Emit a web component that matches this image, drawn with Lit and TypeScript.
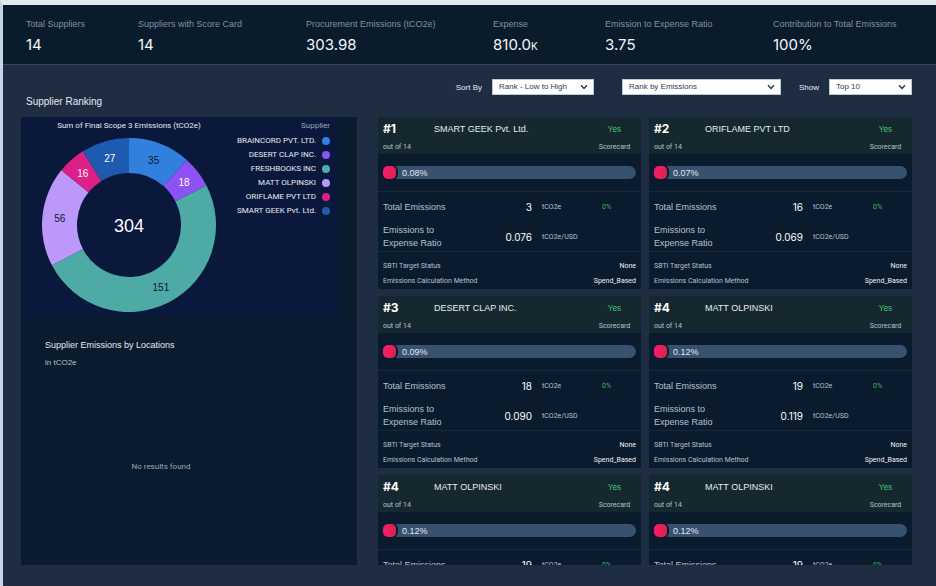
import { LitElement, html, svg, css } from "lit";
import { customElement, property } from "lit/decorators.js";

interface Kpi {
  label: string;
  value: string;
  suffix?: string;
}

interface Slice {
  name: string;
  value: number;
  color: string;
  ink: string;
}

interface Supplier {
  rank: number;
  name: string;
  share: string;
  total: string;
  ratio: string;
}

const KPIS: Kpi[] = [
  { label: "Total Suppliers", value: "14" },
  { label: "Suppliers with Score Card", value: "14" },
  { label: "Procurement Emissions (tCO2e)", value: "303.98" },
  { label: "Expense", value: "810.0", suffix: "K" },
  { label: "Emission to Expense Ratio", value: "3.75" },
  { label: "Contribution to Total Emissions", value: "100%" },
];

const SLICES: Slice[] = [
  { name: "BRAINCORD PVT. LTD.", value: 35, color: "#3180dd", ink: "#0b1730" },
  { name: "DESERT CLAP INC.", value: 18, color: "#8c52f5", ink: "#ffffff" },
  { name: "FRESHBOOKS INC", value: 151, color: "#4daaa5", ink: "#0b1730" },
  { name: "MATT OLPINSKI", value: 56, color: "#bb98fa", ink: "#0b1730" },
  { name: "ORIFLAME PVT LTD", value: 16, color: "#dc2088", ink: "#ffffff" },
  { name: "SMART GEEK Pvt. Ltd.", value: 27, color: "#1e5bb0", ink: "#ffffff" },
];

const SUPPLIERS: Supplier[] = [
  { rank: 1, name: "SMART GEEK Pvt. Ltd.", share: "0.08%", total: "3", ratio: "0.076" },
  { rank: 2, name: "ORIFLAME PVT LTD", share: "0.07%", total: "16", ratio: "0.069" },
  { rank: 3, name: "DESERT CLAP INC.", share: "0.09%", total: "18", ratio: "0.090" },
  { rank: 4, name: "MATT OLPINSKI", share: "0.12%", total: "19", ratio: "0.119" },
  { rank: 4, name: "MATT OLPINSKI", share: "0.12%", total: "19", ratio: "0.119" },
  { rank: 4, name: "MATT OLPINSKI", share: "0.12%", total: "19", ratio: "0.119" },
];

@customElement("donut-chart")
class DonutChart extends LitElement {
  static styles = css`
    :host {
      display: block;
      font-family: "Liberation Sans", Arial, sans-serif;
    }
    svg {
      display: block;
      width: 100%;
    }
    .label {
      font-size: 10px;
      text-anchor: middle;
    }
    .total {
      font-size: 18px;
      text-anchor: middle;
      fill: #ffffff;
    }
  `;

  render() {
    const center = 88;
    const outer = 87;
    const inner = 52;
    const sum = SLICES.reduce((acc, s) => acc + s.value, 0);
    const at = (radius: number, turn: number) => {
      const a = turn * 2 * Math.PI;
      return [center + radius * Math.sin(a), center - radius * Math.cos(a)];
    };
    let start = 0;
    const parts = SLICES.map((s) => {
      const end = start + s.value / sum;
      const large = end - start > 0.5 ? 1 : 0;
      const [ax, ay] = at(outer, start);
      const [bx, by] = at(outer, end);
      const [cx, cy] = at(inner, end);
      const [dx, dy] = at(inner, start);
      const [tx, ty] = at((outer + inner) / 2, (start + end) / 2);
      start = end;
      return svg`
        <path fill=${s.color} d="M${ax} ${ay}A${outer} ${outer} 0 ${large} 1 ${bx} ${by}L${cx} ${cy}A${inner} ${inner} 0 ${large} 0 ${dx} ${dy}Z"></path>
        <text class="label" fill=${s.ink} x=${tx} y=${ty + 4}>${s.value}</text>`;
    });
    return html`
      <svg viewBox="0 0 176 176" role="img" aria-label="Emissions by supplier">
        ${parts}
        <text class="total" x="88" y="95">304</text>
      </svg>
    `;
  }
}

@customElement("supplier-card")
class SupplierCard extends LitElement {
  @property({ attribute: false }) supplier!: Supplier;

  static styles = css`
    :host {
      display: block;
      background: #0a1b2d;
      color: #b6c1cf;
    }
    .head {
      display: grid;
      grid-template-columns: 51px 1fr 33px;
      align-items: center;
      row-gap: 3px;
      padding: 4px 10px 0 5px;
      background: #15282f;
    }
    .rank {
      font: 700 12px/16px Inter, "Liberation Sans", sans-serif;
      color: #ffffff;
    }
    .name {
      margin: 0;
      font-size: 9px;
      line-height: 16px;
      font-weight: 400;
      color: #e6ebf1;
    }
    .yes {
      font: 8px/14px Inter, "Liberation Sans", sans-serif;
      text-align: center;
      color: #3fc466;
    }
    .small {
      font: 7px/14px Roboto, "Liberation Sans", sans-serif;
      white-space: nowrap;
    }
    .score {
      grid-column: 3;
      text-align: center;
    }
    .share {
      padding: 12px 5px;
      border-bottom: 1px solid #16293b;
    }
    .track {
      display: flex;
      align-items: center;
      gap: 6px;
      height: 13px;
      border-radius: 7px;
      background: #37516e;
      font-size: 9px;
      color: #e3e9f0;
    }
    .knob {
      width: 13px;
      height: 13px;
      border-radius: 5px;
      background: linear-gradient(90deg, #fb1a6e, #d92448);
      box-shadow: 1px 0 0 1px #0a1b2d;
      clip-path: inset(0 -2px 0 0);
    }
    .metrics {
      display: grid;
      grid-template-columns: 90fr 59fr 70fr 34fr;
      align-items: center;
      row-gap: 7px;
      margin: 0;
      padding: 5px 5px 1px;
      border-bottom: 1px solid #16293b;
    }
    .metrics dt,
    .metrics dd {
      margin: 0;
    }
    .metrics dt {
      grid-column: 1;
      font-size: 9px;
      line-height: 13px;
    }
    .metrics .value {
      font: 10px/20px Inter, "Liberation Sans", sans-serif;
      text-align: right;
      color: #ffffff;
    }
    .metrics .unit {
      padding-left: 10px;
      font: 7px/14px Roboto, "Liberation Sans", sans-serif;
    }
    .metrics .delta {
      font: 7px/14px Roboto, "Liberation Sans", sans-serif;
      color: #3fb45f;
    }
    .facts {
      margin: 0;
      padding: 7px 5px 0;
      font: 7px/15px Roboto, "Liberation Sans", sans-serif;
    }
    .fact {
      display: flex;
      justify-content: space-between;
    }
    .fact dd {
      margin: 0;
      color: #eef2f6;
    }
  `;

  render() {
    const s = this.supplier;
    return html`
      <article>
        <header class="head">
          <span class="rank">#${s.rank}</span>
          <h3 class="name">${s.name}</h3>
          <span class="yes">Yes</span>
          <span class="small">out of 14</span>
          <span class="small score">Scorecard</span>
        </header>
        <div class="share">
          <div class="track"><span class="knob"></span><span>${s.share}</span></div>
        </div>
        <dl class="metrics">
          <dt>Total Emissions</dt>
          <dd class="value">${s.total}</dd>
          <dd class="unit">tCO2e</dd>
          <dd class="delta">0%</dd>
          <dt>Emissions to<br />Expense Ratio</dt>
          <dd class="value">${s.ratio}</dd>
          <dd class="unit">tCO2e/USD</dd>
        </dl>
        <dl class="facts">
          <div class="fact"><dt>SBTI Target Status</dt><dd>None</dd></div>
          <div class="fact"><dt>Emissions Calculation Method</dt><dd>Spend_Based</dd></div>
        </dl>
      </article>
    `;
  }
}

@customElement("app-root")
class AppRoot extends LitElement {
  static styles = css`
    :host {
      display: flex;
      flex-direction: column;
      box-sizing: border-box;
      height: 100vh;
      border-top: 5px solid #e3e8ec;
      border-left: 3px solid #c3d5e5;
      background: #1f2d43;
      color: #e6ebf1;
      font-family: "Liberation Sans", Arial, sans-serif;
    }
    .kpis {
      display: grid;
      grid-template-columns: 112fr 168fr 187fr 112fr 168fr 163fr;
      margin: 0;
      padding: 12px 0 8px 23px;
      background: #0a1b2c;
      border-bottom: 1px solid #324965;
    }
    .kpis dt {
      font-size: 9px;
      line-height: 14px;
      color: #8290a1;
    }
    .kpis dd {
      margin: 4px 0 0;
      font: 15px/20px Inter, "Liberation Sans", sans-serif;
      color: #f4f7fa;
    }
    .suffix {
      font-size: 10px;
    }
    .toolbar {
      display: flex;
      justify-content: space-between;
      align-items: flex-start;
      box-sizing: border-box;
      min-height: 52px;
      padding: 14px 24px 8px 23px;
    }
    h1 {
      align-self: flex-end;
      margin: 0;
      font-size: 10px;
      line-height: 14px;
      font-weight: 400;
    }
    .controls {
      display: flex;
      align-items: center;
      font-size: 8px;
    }
    .controls label {
      margin-right: 10px;
    }
    .picker {
      position: relative;
      display: flex;
    }
    .sort {
      width: 102px;
      margin-right: 28px;
    }
    .metric {
      width: 159px;
      margin-right: 18px;
    }
    .count {
      width: 83px;
    }
    select {
      appearance: none;
      width: 100%;
      height: 16px;
      margin: 0;
      padding: 0 18px 0 6px;
      border: 1px solid #b9c8da;
      border-radius: 0;
      background: #ffffff;
      color: #2b3d58;
      font: 8px/14px "Liberation Sans", Arial, sans-serif;
    }
    .chevron {
      position: absolute;
      top: 5px;
      right: 6px;
      width: 8px;
      height: 6px;
      fill: none;
      stroke: #26364e;
      stroke-width: 1.4;
      pointer-events: none;
    }
    main {
      display: grid;
      grid-template-columns: 336fr 534fr;
      grid-template-rows: minmax(0, 1fr);
      gap: 21px;
      flex: 1;
      min-height: 0;
      padding: 0 24px 21px 18px;
    }
    .side {
      background: #0a1b2d;
    }
    .chart {
      display: grid;
      grid-template-columns: 176px 1fr;
      column-gap: 12px;
      margin-right: 19px;
      padding: 3px 8px 5px 20px;
      background: #0a183c;
      font-family: Roboto, "Liberation Sans", sans-serif;
      font-size: 8px;
    }
    .chart-title {
      margin: 0;
      font-size: 8px;
      line-height: 12px;
      font-weight: 400;
      text-align: center;
    }
    .chart donut-chart {
      margin-top: 5px;
    }
    .legend {
      grid-column: 2;
      grid-row: 1 / 3;
      text-align: right;
    }
    .legend-title {
      line-height: 12px;
      color: #9aa6bb;
    }
    .legend ul {
      display: grid;
      gap: 2px;
      margin: 3px 0 0;
      padding: 0;
      list-style: none;
    }
    .legend li {
      display: flex;
      justify-content: flex-end;
      align-items: center;
      gap: 6px;
      line-height: 12px;
      white-space: nowrap;
    }
    .dot {
      width: 8px;
      height: 8px;
      border-radius: 50%;
    }
    .locations {
      padding: 20px 24px;
    }
    h2 {
      margin: 0;
      font-size: 9px;
      line-height: 14px;
      font-weight: 400;
    }
    .locations-unit {
      margin: 4px 0 0;
      font-size: 8px;
      line-height: 14px;
      color: #b6c1cf;
    }
    .empty {
      margin: 90px 56px 0 0;
      font: 8px/14px Roboto, "Liberation Sans", sans-serif;
      text-align: center;
      color: #98a8bd;
    }
    .cards {
      display: grid;
      grid-template-columns: 1fr 1fr;
      align-content: start;
      gap: 7px 8px;
      overflow: hidden;
    }
  `;

  private picker(id: string, size: string, label: string, text: string) {
    return html`
      <span class="picker ${size}">
        <select id=${id} aria-label=${label}>
          <option>${text}</option>
        </select>
        <svg class="chevron" viewBox="0 0 8 6" aria-hidden="true">
          <path d="M1 1.2 4 4.4 7 1.2"></path>
        </svg>
      </span>
    `;
  }

  render() {
    return html`
      <dl class="kpis">
        ${KPIS.map(
          (k) => html`<div>
            <dt>${k.label}</dt>
            <dd>${k.value}${k.suffix ? html`<span class="suffix">${k.suffix}</span>` : ""}</dd>
          </div>`
        )}
      </dl>
      <div class="toolbar">
        <h1>Supplier Ranking</h1>
        <div class="controls">
          <label for="sort">Sort By</label>
          ${this.picker("sort", "sort", "Sort By", "Rank - Low to High")}
          ${this.picker("metric", "metric", "Rank by", "Rank by Emissions")}
          <label for="count">Show</label>
          ${this.picker("count", "count", "Show", "Top 10")}
        </div>
      </div>
      <main>
        <section class="side">
          <div class="chart">
            <p class="chart-title">Sum of Final Scope 3 Emissions (tCO2e)</p>
            <donut-chart></donut-chart>
            <div class="legend">
              <div class="legend-title">Supplier</div>
              <ul>
                ${SLICES.map(
                  (s) => html`<li>
                    ${s.name}<span class="dot" style="background:${s.color}"></span>
                  </li>`
                )}
              </ul>
            </div>
          </div>
          <div class="locations">
            <h2>Supplier Emissions by Locations</h2>
            <p class="locations-unit">in tCO2e</p>
            <p class="empty">No results found</p>
          </div>
        </section>
        <section class="cards" aria-label="Suppliers">
          ${SUPPLIERS.map((s) => html`<supplier-card .supplier=${s}></supplier-card>`)}
        </section>
      </main>
    `;
  }
}
